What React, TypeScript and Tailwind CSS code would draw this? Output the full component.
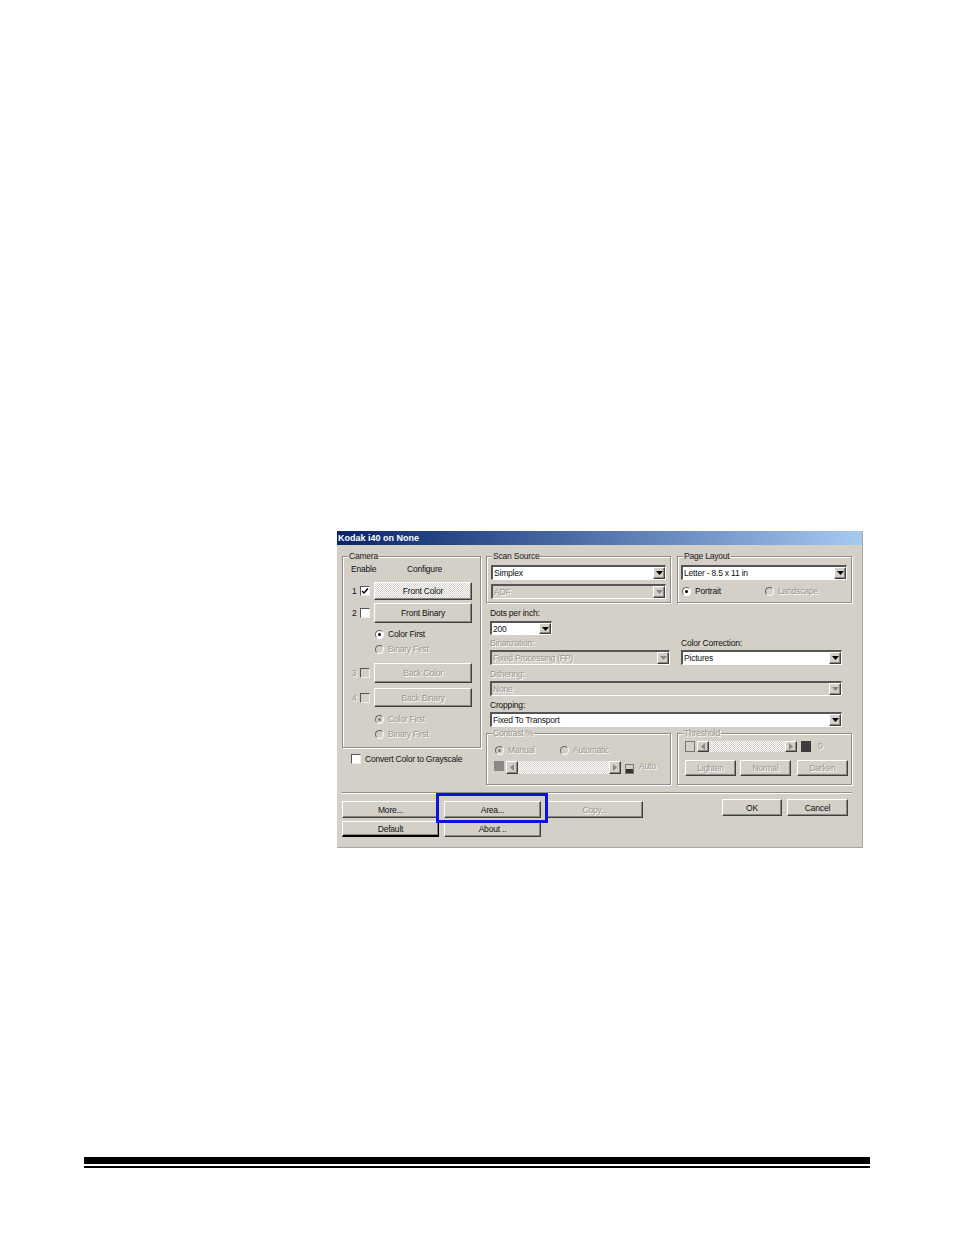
import type { ReactNode } from 'react'

const off = 'text-[#98968f] [text-shadow:1px_1px_0_#fff]'
const dither = 'bg-[repeating-conic-gradient(#d4d0c8_0_25%,#ffffff_0_50%)] bg-[length:2px_2px]'
const raised = 'border border-t-white border-l-white border-r-[#3f3f3f] border-b-[#3f3f3f] shadow-[inset_-1px_-1px_0_#8a8780]'

function Btn({ label, className = '', disabled = false }: { label: string; className?: string; disabled?: boolean }) {
  return (
    <div className={`flex items-center justify-center bg-[#d4d0c8] ${raised} ${disabled ? off : 'text-[#111]'} ${className}`}>
      {label}
    </div>
  )
}

function Group({ title, disabled = false, className = '', children }: { title: string; disabled?: boolean; className?: string; children: ReactNode }) {
  return (
    <div className={`relative border border-[#8f8d87] shadow-[1px_1px_0_#fff,inset_1px_1px_0_#fff] ${className}`}>
      <span className={`absolute -top-[6px] left-[5px] bg-[#d4d0c8] px-[1px] leading-[11px] ${disabled ? off : 'text-[#222]'}`}>{title}</span>
      {children}
    </div>
  )
}

function Combo({ value, disabled = false, className = '' }: { value: string; disabled?: boolean; className?: string }) {
  return (
    <div className={`flex items-center justify-between border border-t-[#555] border-l-[#555] border-t-2 border-l-2 border-r-white border-b-white ${disabled ? 'bg-[#d4d0c8]' : 'bg-white'} ${className}`}>
      <span className={`pl-[1px] ${disabled ? off : 'text-[#111]'}`}>{value}</span>
      <span className={`flex h-full w-[12px] items-center justify-center bg-[#d4d0c8] ${raised}`}>
        <svg width="7" height="4" viewBox="0 0 7 4"><path d="M0 0h7L3.5 4z" fill={disabled ? '#8a8780' : '#000'} /></svg>
      </span>
    </div>
  )
}

function Check({ checked = false, disabled = false }: { checked?: boolean; disabled?: boolean }) {
  return (
    <span className={`flex h-[10px] w-[10px] items-center justify-center border border-t-[#555] border-l-[#555] border-r-[#eee] border-b-[#eee] ${disabled ? 'bg-[#d4d0c8]' : 'bg-white'}`}>
      {checked && (
        <svg width="8" height="8" viewBox="0 0 8 8"><path d="M1 4l2 2 4-4.5" fill="none" stroke="#000" strokeWidth="1.5" /></svg>
      )}
    </span>
  )
}

function Radio({ label, on = false, disabled = false, labelClass = '' }: { label: string; on?: boolean; disabled?: boolean; labelClass?: string }) {
  return (
    <div className="flex h-[10px] items-center">
      <span className={`flex h-[9px] w-[9px] items-center justify-center rounded-full border border-t-[#666] border-l-[#666] border-r-white border-b-white ${disabled ? 'bg-[#d4d0c8]' : 'bg-white'}`}>
        {on && <span className={`h-[3px] w-[3px] rounded-full ${disabled ? 'bg-[#777]' : 'bg-black'}`} />}
      </span>
      <span className={`ml-[4px] ${disabled ? off : 'text-[#111]'} ${labelClass}`}>{label}</span>
    </div>
  )
}

function Camera({ n, label, disabled = false, checked = false, className = '', btnClass = '' }: { n: string; label: string; disabled?: boolean; checked?: boolean; className?: string; btnClass?: string }) {
  return (
    <div className={`flex items-center pl-[9px] ${className}`}>
      <span className={`w-[8px] ${disabled ? off : 'text-[#111]'}`}>{n}</span>
      <Check checked={checked} disabled={disabled} />
      <Btn label={label} disabled={disabled} className={`ml-[4px] h-full w-[98px] ${btnClass}`} />
    </div>
  )
}

function Scroll({ className = '' }: { className?: string }) {
  const arrow = `flex h-full w-[12px] shrink-0 items-center justify-center bg-[#d4d0c8] ${raised}`
  return (
    <div className={`flex ${dither} ${className}`}>
      <span className={arrow}>
        <svg width="4" height="7" viewBox="0 0 4 7"><path d="M4 0v7L0 3.5z" fill="#8a8780" /></svg>
      </span>
      <span className="flex-1" />
      <span className={arrow}>
        <svg width="4" height="7" viewBox="0 0 4 7"><path d="M0 0v7l4-3.5z" fill="#8a8780" /></svg>
      </span>
    </div>
  )
}

export default function App() {
  return (
    <div className="min-h-[1235px] bg-white pt-[531px] font-['Liberation_Sans',Arial,sans-serif] text-[8.5px] leading-[10px] tracking-[-0.2px]">
      <div className="ml-[337px] h-[317px] w-[526px] border-r border-b border-[#a9a7a1] bg-[#d4d0c8]">
        <div className="flex h-[14px] items-center bg-gradient-to-r from-[#0a246a] to-[#a6caf0] pl-[1px] text-[9px] font-bold tracking-normal text-white">
          Kodak i40 on None
        </div>

        <div className="flex pl-[5px] pt-[11px]">
          <div className="w-[139px]">
            <Group title="Camera" className="h-[192px]">
              <div className="mt-[6px] flex h-[12px] items-center pl-[8px] text-[#111]">
                <span className="w-[56px]">Enable</span>
                <span>Configure</span>
              </div>
              <Camera n="1" label="Front Color" checked className="mt-[7px] h-[18px]" btnClass={dither} />
              <Camera n="2" label="Front Binary" className="mt-[3px] h-[20px]" />
              <div className="ml-[32px] mt-[6px]"><Radio label="Color First" on /></div>
              <div className="ml-[32px] mt-[5px]"><Radio label="Binary First" disabled /></div>
              <Camera n="3" label="Back Color" disabled className="mt-[9px] h-[20px]" />
              <Camera n="4" label="Back Binary" disabled className="mt-[5px] h-[19px]" />
              <div className="ml-[32px] mt-[7px]"><Radio label="Color First" on disabled /></div>
              <div className="ml-[32px] mt-[5px]"><Radio label="Binary First" disabled /></div>
            </Group>
            <div className="ml-[9px] mt-[6px] flex items-center text-[#111]">
              <Check />
              <span className="ml-[4px]">Convert Color to Grayscale</span>
            </div>
          </div>

          <div className="ml-[5px] w-[366px]">
            <div className="flex gap-[6px]">
              <Group title="Scan Source" className="h-[47px] w-[185px]">
                <Combo value="Simplex" className="ml-[4px] mt-[8px] h-[15px] w-[175px]" />
                <Combo value="ADF" disabled className="ml-[4px] mt-[4px] h-[15px] w-[175px]" />
              </Group>
              <Group title="Page Layout" className="h-[47px] w-[175px]">
                <Combo value="Letter - 8.5 x 11 in" className="ml-[3px] mt-[8px] h-[15px] w-[166px]" />
                <div className="ml-[4px] mt-[6px] flex">
                  <Radio label="Portrait" on labelClass="w-[70px]" />
                  <Radio label="Landscape" disabled />
                </div>
              </Group>
            </div>

            <p className="ml-[4px] mt-[5px] h-[10px] text-[#111]">Dots per inch:</p>
            <Combo value="200" className="ml-[4px] mt-[3px] h-[14px] w-[62px]" />

            <div className="mt-[3px] flex">
              <div className="w-[195px] pl-[4px]">
                <p className={`h-[10px] ${off}`}>Binarization:</p>
                <Combo value="Fixed Processing (FP)" disabled className="mt-[2px] h-[15px] w-[180px]" />
              </div>
              <div>
                <p className="h-[10px] text-[#111]">Color Correction:</p>
                <Combo value="Pictures" className="mt-[2px] h-[15px] w-[161px]" />
              </div>
            </div>

            <p className={`ml-[4px] mt-[4px] h-[10px] ${off}`}>Dithering:</p>
            <Combo value="None" disabled className="ml-[4px] mt-[2px] h-[15px] w-[352px]" />
            <p className="ml-[4px] mt-[4px] h-[10px] text-[#111]">Cropping:</p>
            <Combo value="Fixed To Transport" className="ml-[4px] mt-[2px] h-[15px] w-[352px]" />

            <div className="mt-[6px] flex gap-[6px]">
              <Group title="Contrast %" disabled className="h-[52px] w-[185px]">
                <div className="ml-[8px] mt-[11px] flex">
                  <Radio label="Manual" on disabled labelClass="w-[52px]" />
                  <Radio label="Automatic" disabled />
                </div>
                <div className="ml-[7px] mt-[6px] flex items-start">
                  <span className="h-[10px] w-[10px] bg-[#8a8884]" />
                  <Scroll className="ml-[2px] h-[13px] w-[115px]" />
                  <span className="ml-[4px] mt-[3px] h-[10px] w-[9px] border border-[#777] bg-[linear-gradient(#d4d0c8_45%,#333_45%)]" />
                  <span className={`ml-[5px] ${off}`}>Auto</span>
                </div>
              </Group>
              <Group title="Threshold" disabled className="h-[52px] w-[175px]">
                <div className="ml-[7px] mt-[7px] flex h-[11px] items-start">
                  <span className="h-[11px] w-[10px] border border-[#777]" />
                  <Scroll className="ml-[2px] h-[11px] w-[100px]" />
                  <span className="ml-[4px] h-[11px] w-[10px] bg-[#3c3c3c]" />
                  <span className={`ml-[7px] ${off}`}>0</span>
                </div>
                <div className="ml-[7px] mt-[8px] flex">
                  <Btn label="Lighten" disabled className="h-[16px] w-[51px]" />
                  <Btn label="Normal" disabled className="ml-[4px] h-[16px] w-[51px]" />
                  <Btn label="Darken" disabled className="ml-[6px] h-[16px] w-[51px]" />
                </div>
              </Group>
            </div>
          </div>
        </div>

        <div className="ml-[5px] mt-[7px] h-[2px] w-[510px] border-t border-[#8f8d87] bg-white" />

        <div className="ml-[5px] flex items-start">
          <div className="mt-[7px] grid grid-cols-[97px_97px_97px] gap-x-[5px] gap-y-[3px]">
            <Btn label="More..." className="h-[17px]" />
            <div className="relative">
              <Btn label="Area..." className="h-[17px]" />
              <div className="absolute -left-[8px] -top-[8px] h-[30px] w-[112px] border-[3px] border-[#0a14d8]" />
            </div>
            <Btn label="Copy..." disabled className="ml-[1px] h-[17px]" />
            <Btn label="Default" className="h-[16px] border-t-black border-l-black border-r-black border-b-black border-b-2" />
            <Btn label="About .." className="h-[16px]" />
          </div>
          <div className="ml-[79px] mt-[5px] flex gap-[5px]">
            <Btn label="OK" className="h-[17px] w-[60px]" />
            <Btn label="Cancel" className="h-[17px] w-[61px]" />
          </div>
        </div>
      </div>

      <div className="ml-[84px] mt-[309px] w-[786px]">
        <div className="h-[7px] bg-black" />
        <div className="mt-[2px] h-[2px] bg-black" />
      </div>
    </div>
  )
}
